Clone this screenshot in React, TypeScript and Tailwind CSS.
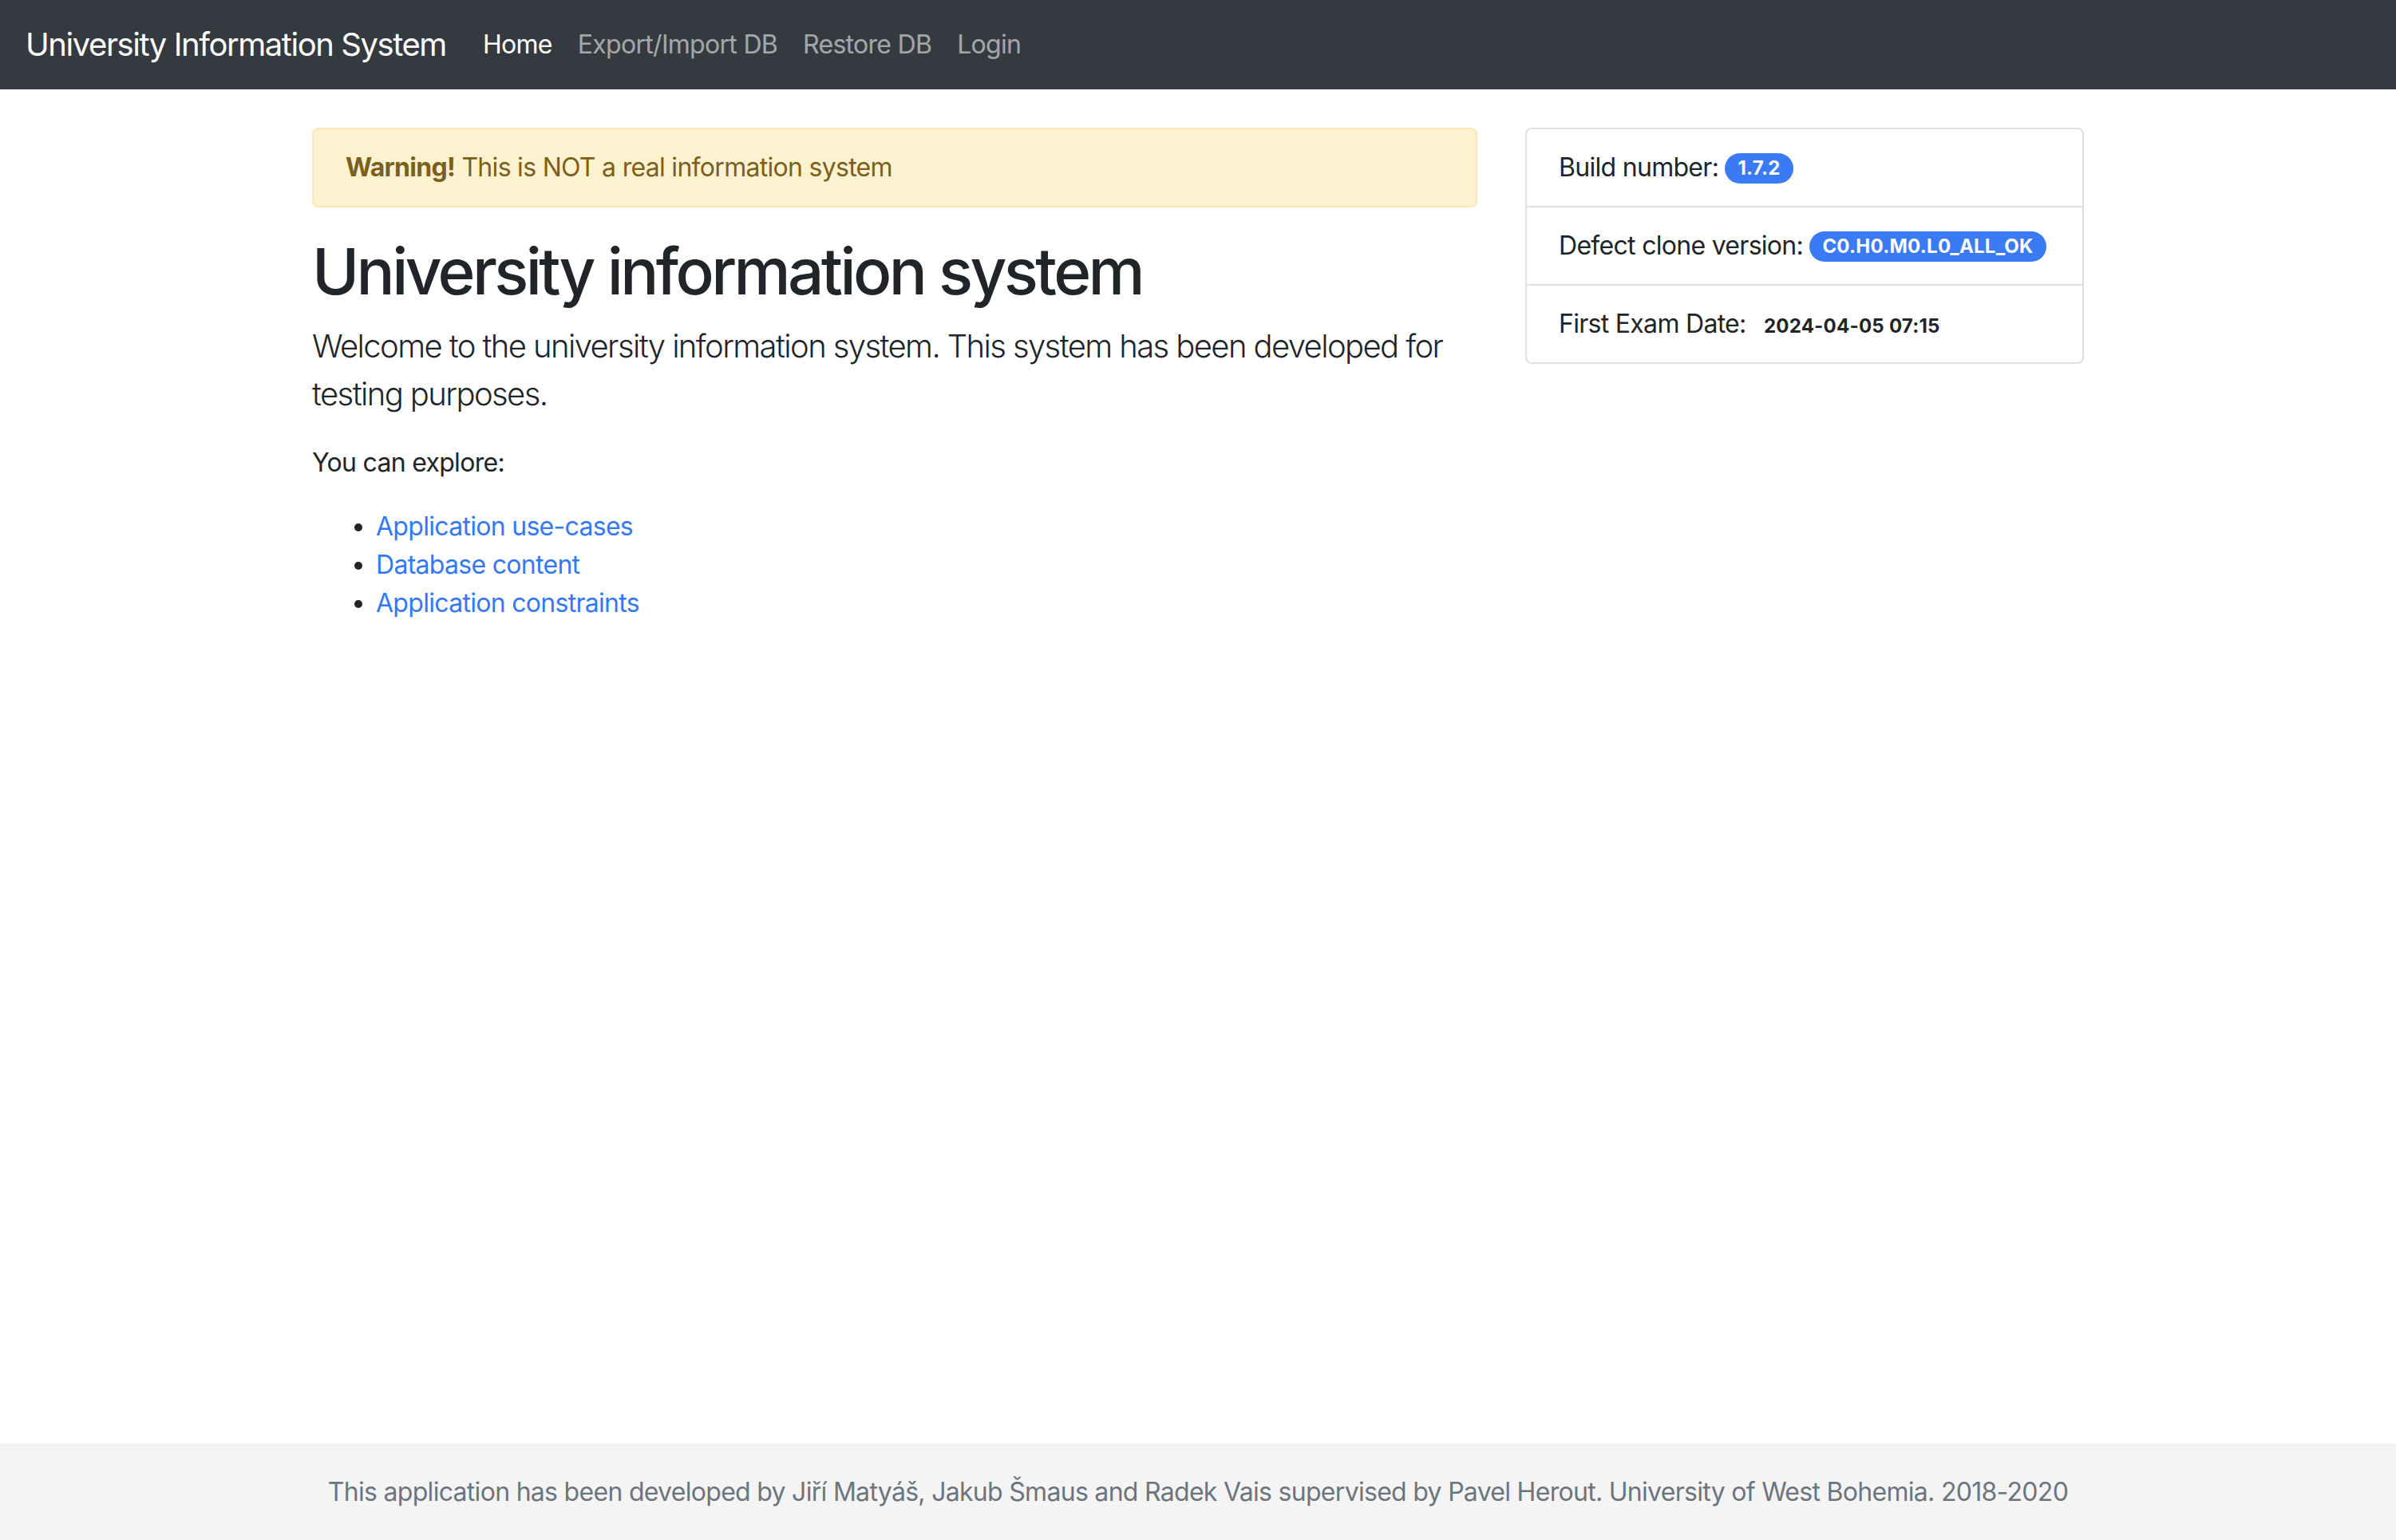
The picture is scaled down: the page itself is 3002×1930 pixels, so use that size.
const links = ["Application use-cases", "Database content", "Application constraints"];

const navItems = [
  { label: "Home", active: true },
  { label: "Export/Import DB", active: false },
  { label: "Restore DB", active: false },
  { label: "Login", active: false },
];

export default function App() {
  return (
    <div className="flex min-h-screen flex-col bg-white font-['Inter',_'Liberation_Sans',_sans-serif] text-[32px] leading-[48px] tracking-[-0.022em] text-[#212529]">
      <nav className="flex h-[112px] items-center bg-[#343a40] px-[32px]">
        <a className="mr-[30px] py-[10px] text-[40px] leading-[60px] tracking-[-0.036em] text-white">University Information System</a>
        <ul className="flex">
          {navItems.map((item) => (
            <li key={item.label}>
              <a className={item.active ? "block px-[16px] py-[16px] text-white" : "block px-[16px] py-[16px] text-white/55"}>
                {item.label}
              </a>
            </li>
          ))}
        </ul>
      </nav>

      <main className="flex-1">
        <div className="mx-auto mt-[48px] flex w-[2220px] gap-[60px]">
          <div className="w-[1460px]">
            <div className="mb-[32px] rounded-[8px] border-2 border-[#fbe9b5] bg-[#fdf2d0] px-[40px] py-[24px] text-[#7b5f1d]">
              <strong className="font-bold">Warning!</strong> This is NOT a real information system
            </div>
            <h1 className="mb-[16px] text-[80px] font-medium leading-[96px] tracking-[-0.045em]">University information system</h1>
            <p className="mb-[32px] text-[40px] font-light leading-[60px] tracking-[-0.04em]">
              Welcome to the university information system. This system has been developed for testing purposes.
            </p>
            <p className="mb-[32px]">You can explore:</p>
            <ul className="list-disc pl-[80px]">
              {links.map((l) => (
                <li key={l}>
                  <a className="text-[#3478f6]">{l}</a>
                </li>
              ))}
            </ul>
          </div>

          <div className="w-[700px] self-start">
            <ul className="rounded-[8px] border-2 border-[#dfdfdf]">
              <li className="px-[40px] py-[24px]">
                Build number:{" "}
                <span className="inline-block rounded-full bg-[#3a7bf5] px-[16px] py-[7px] align-[2px] text-[24px] font-bold leading-none tracking-[0.01em] text-white">
                  1.7.2
                </span>
              </li>
              <li className="border-t-2 border-[#dfdfdf] px-[40px] py-[24px]">
                Defect clone version:{" "}
                <span className="inline-block rounded-full bg-[#3a7bf5] px-[16px] py-[7px] align-[2px] text-[24px] font-bold leading-none tracking-[0.01em] text-white">
                  C0.H0.M0.L0_ALL_OK
                </span>
              </li>
              <li className="border-t-2 border-[#dfdfdf] px-[40px] py-[24px]">
                First Exam Date:{" "}
                <span className="inline-block px-[14px] text-[24px] font-bold leading-none tracking-[0.01em]">2024-04-05 07:15</span>
              </li>
            </ul>
          </div>
        </div>
      </main>

      <footer className="flex h-[121px] items-center justify-center bg-[#f4f4f4] text-[#6c757d]">
        This application has been developed by Jiří Matyáš, Jakub Šmaus and Radek Vais supervised by Pavel Herout. University of West Bohemia. 2018-2020
      </footer>
    </div>
  );
}
